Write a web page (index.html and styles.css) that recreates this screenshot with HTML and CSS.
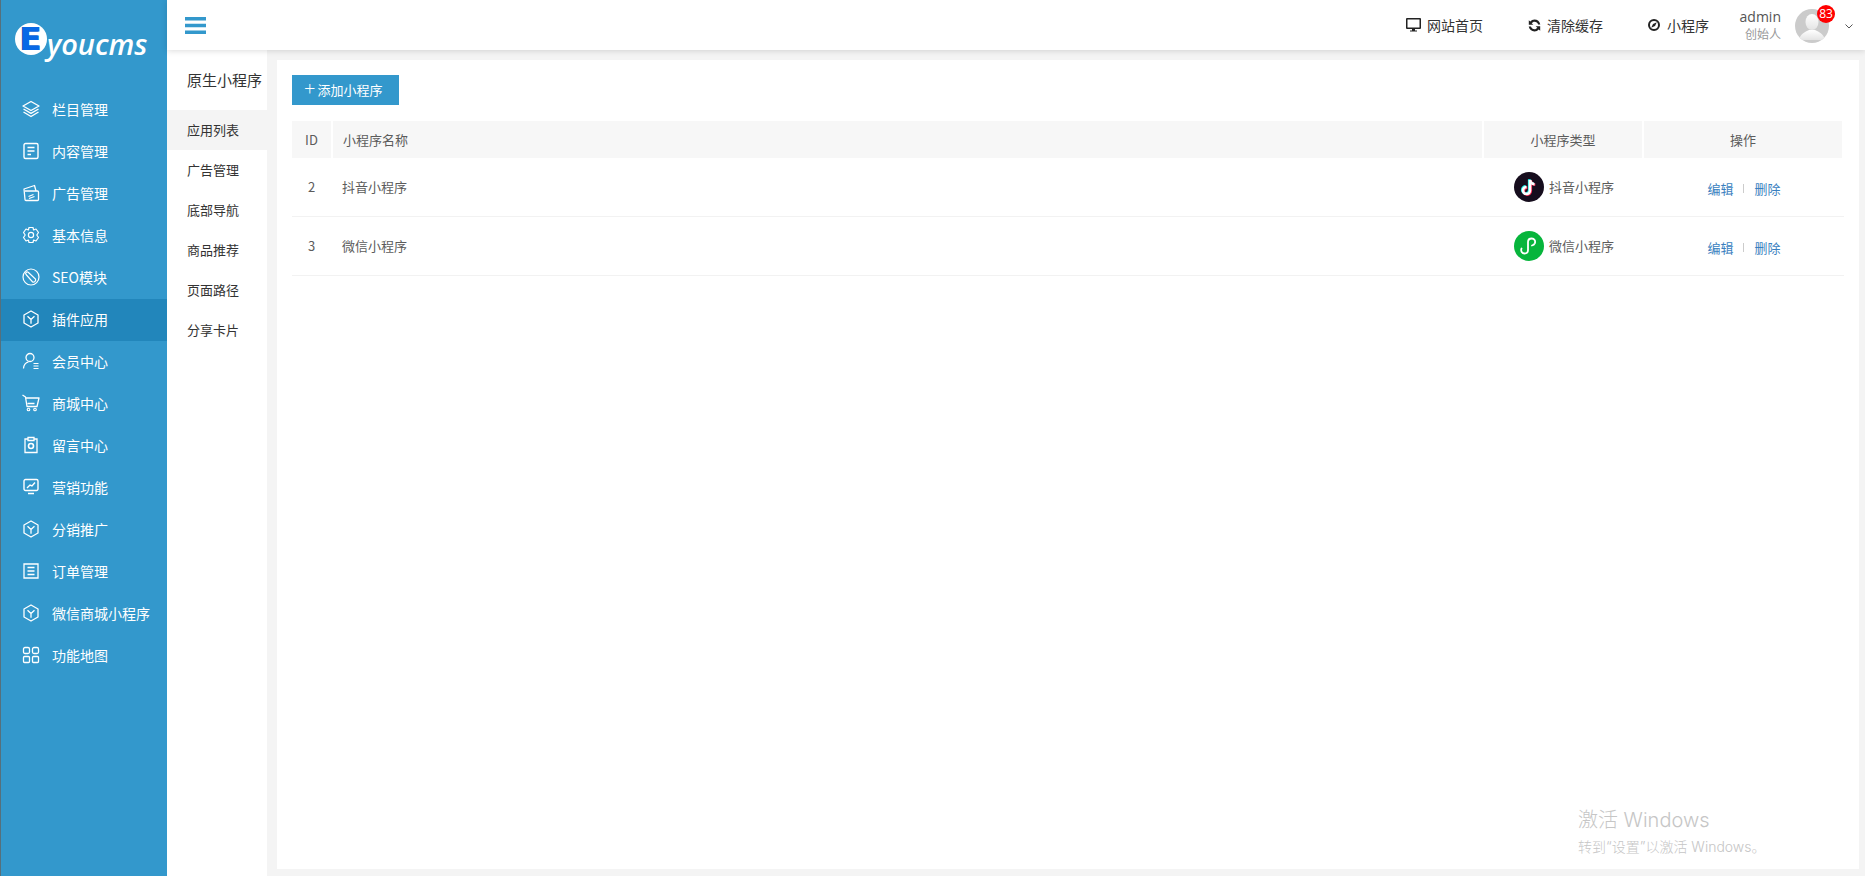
FILE: index.html
```html
<!DOCTYPE html>
<html lang="zh-CN">
<head>
<meta charset="utf-8">
<title>原生小程序</title>
<link rel="stylesheet" href="styles.css">
</head>
<body>
<svg class="defs" width="0" height="0" aria-hidden="true">
  <symbol id="cube" viewBox="0 0 18 18"><path d="M9 1 16 5V13L9 17 2 13V5Z M5.500 6.200 9 9.400 12.500 6.200 M9 9.400V13.800" fill="none" stroke="currentColor" stroke-width="1.300" stroke-linejoin="round"/></symbol>
</svg>
<div class="app">
  <aside class="sidebar">
    <div class="logo"><span class="logo-e">E</span><span class="logo-text">youcms</span></div>
    <nav class="menu">
      <a class="menu-item"><svg class="mi" viewBox="0 0 18 18"><path d="M9 1.500 17 6 9 10.500 1 6Z M1.500 9 9 13.300 16.500 9 M1.500 12 9 16.500 16.500 12" fill="none" stroke="currentColor" stroke-width="1.400" stroke-linejoin="round"/></svg>栏目管理</a>
      <a class="menu-item"><svg class="mi" viewBox="0 0 18 18"><path d="M3.500 1.500H14.500A1.500 1.500 0 0 1 16 3V15A1.500 1.500 0 0 1 14.500 16.500H3.500A1.500 1.500 0 0 1 2 15V3A1.500 1.500 0 0 1 3.500 1.500Z M5.500 5.500H12.500 M5.500 9H12.500 M5.500 12.500H9" fill="none" stroke="currentColor" stroke-width="1.400"/></svg>内容管理</a>
      <a class="menu-item"><svg class="mi" viewBox="0 0 18 18"><path d="M3 7H15.500A1 1 0 0 1 16.500 8V15.500A1 1 0 0 1 15.500 16.500H4A1 1 0 0 1 3 15.500L2 5 12.500 1.500 14 7 M6.500 12.500 11.500 10.500 M7 14.500 12.500 12.500" fill="none" stroke="currentColor" stroke-width="1.300" stroke-linejoin="round"/></svg>广告管理</a>
      <a class="menu-item"><svg class="mi" viewBox="0 0 18 18"><path d="M7 1.500H11L11.600 4 14 3 16.500 6.500 14.800 9 16.500 11.500 14 15 11.600 14 11 16.500H7L6.400 14 4 15 1.500 11.500 3.200 9 1.500 6.500 4 3 6.400 4Z" fill="none" stroke="currentColor" stroke-width="1.200" stroke-linejoin="round"/><circle cx="9" cy="9" r="2.600" fill="none" stroke="currentColor" stroke-width="1.200"/></svg>基本信息</a>
      <a class="menu-item"><svg class="mi" viewBox="0 0 18 18"><circle cx="9" cy="9" r="8" fill="none" stroke="currentColor" stroke-width="1.200"/><path d="M6.200 4.300 13.500 11A2.300 2.300 0 0 1 10.600 14L4.300 6.800A1.500 1.500 0 0 1 6.200 4.300Z" fill="none" stroke="currentColor" stroke-width="1.200"/></svg>SEO模块</a>
      <a class="menu-item active"><svg class="mi"><use href="#cube"/></svg>插件应用</a>
      <a class="menu-item"><svg class="mi" viewBox="0 0 18 18"><circle cx="8" cy="5.500" r="4" fill="none" stroke="currentColor" stroke-width="1.300"/><path d="M1.500 16.500C1.800 12.500 3.500 10.500 6.500 9.800 M11.500 11.500H16.500 M11.500 14H16.500 M11.500 16.500H16.500" fill="none" stroke="currentColor" stroke-width="1.200"/></svg>会员中心</a>
      <a class="menu-item"><svg class="mi" viewBox="0 0 18 18"><path d="M.5 1 3.500 3 5 12.500H15L17 4H3.800 M5.500 9.500H12.500" fill="none" stroke="currentColor" stroke-width="1.300" stroke-linejoin="round"/><circle cx="6.500" cy="15.500" r="1.300" fill="none" stroke="currentColor" stroke-width="1.100"/><circle cx="13" cy="15.500" r="1.300" fill="none" stroke="currentColor" stroke-width="1.100"/></svg>商城中心</a>
      <a class="menu-item"><svg class="mi" viewBox="0 0 18 18"><path d="M6 3H3V16.500H15V3H12 M6 1.500H12V4.500H6Z" fill="none" stroke="currentColor" stroke-width="1.300"/><circle cx="9" cy="10" r="2.500" fill="none" stroke="currentColor" stroke-width="1.600"/></svg>留言中心</a>
      <a class="menu-item"><svg class="mi" viewBox="0 0 18 18"><path d="M3.500 1.500H14.500A1.500 1.500 0 0 1 16 3V11A1.500 1.500 0 0 1 14.500 12.500H3.500A1.500 1.500 0 0 1 2 11V3A1.500 1.500 0 0 1 3.500 1.500Z M5 10 8 7 10 8 13 4.500 M6 15.500H12" fill="none" stroke="currentColor" stroke-width="1.400"/></svg>营销功能</a>
      <a class="menu-item"><svg class="mi"><use href="#cube"/></svg>分销推广</a>
      <a class="menu-item"><svg class="mi" viewBox="0 0 18 18"><path d="M2 2H16V16H2Z M5.500 5.500H12.500 M5.500 9H12.500 M5.500 12.500H12.500" fill="none" stroke="currentColor" stroke-width="1.300"/></svg>订单管理</a>
      <a class="menu-item"><svg class="mi"><use href="#cube"/></svg>微信商城小程序</a>
      <a class="menu-item"><svg class="mi" viewBox="0 0 18 18"><g fill="none" stroke="currentColor" stroke-width="1.300"><rect x="1.500" y="1.500" width="6" height="6" rx="1.500"/><rect x="10.500" y="1.500" width="6" height="6" rx="1.500"/><rect x="1.500" y="10.500" width="6" height="6" rx="1"/><rect x="10.500" y="10.500" width="6" height="6" rx="1"/></g></svg>功能地图</a>
    </nav>
  </aside>
  <div class="main">
    <header class="topbar">
      <svg class="burger" viewBox="0 0 21 17"><path d="M0 0H21V3.500H0Z M0 6.800H21V10.300H0Z M0 13.500H21V17H0Z" fill="currentColor"/></svg>
      <div class="tools">
        <a class="tool tool-home"><svg class="ti ti-w15" viewBox="0 0 15 14"><path d="M0 1A1 1 0 0 1 1 0H14A1 1 0 0 1 15 1V10A1 1 0 0 1 14 11H9V12.500H11V13.500H4V12.500H6V11H1A1 1 0 0 1 0 10Z M1.500 1.500V9.500H13.500V1.500Z" fill="#222" fill-rule="evenodd"/></svg>网站首页</a>
        <a class="tool tool-clear"><svg class="ti ti-w13" viewBox="0 0 13 13"><path d="M12.300 5.400C11.800 2.500 9.400.5 6.500.5 4.800.5 3.300 1.300 2.300 2.500L.8 1.200V5.700H5.300L3.700 4.200C4.400 3.300 5.400 2.700 6.500 2.700 8.200 2.700 9.600 3.800 10.100 5.400Z M.7 7.600C1.200 10.500 3.600 12.500 6.500 12.500 8.200 12.500 9.700 11.700 10.700 10.500L12.200 11.800V7.300H7.700L9.300 8.800C8.600 9.700 7.600 10.300 6.500 10.300 4.800 10.300 3.400 9.200 2.900 7.600Z" fill="#222"/></svg>清除缓存</a>
        <a class="tool tool-mini"><svg class="ti ti-w12" viewBox="0 0 12 12"><circle cx="6" cy="6" r="5" fill="none" stroke="#222" stroke-width="2"/><path d="M8.800 3.200 7 7 3.200 8.800 5 5Z" fill="#222"/></svg>小程序</a>
        <div class="who"><span class="who-name">admin</span><span class="who-role">创始人</span></div>
        <div class="avatar">
          <svg viewBox="0 0 34 34"><defs><clipPath id="avclip"><circle cx="17" cy="17" r="17"/></clipPath><linearGradient id="avg" x1="0" y1="0" x2="0" y2="1"><stop offset="0" stop-color="#fff"/><stop offset="1" stop-color="#e4e4e4"/></linearGradient></defs><circle cx="17" cy="17" r="17" fill="#cbcbcb"/><g clip-path="url(#avclip)" fill="url(#avg)"><ellipse cx="17" cy="13" rx="6.500" ry="8"/><path d="M4 31C5 25 10 23 14 21H20C24 23 29 25 30 31Z"/></g></svg>
          <span class="badge">83</span>
        </div>
        <svg class="chev" viewBox="0 0 8 5"><path d="M.5.500 4 4 7.500.500" fill="none" stroke="#555" stroke-width="1"/></svg>
      </div>
    </header>
    <div class="body-row">
      <nav class="subnav">
        <div class="subnav-title">原生小程序</div>
        <a class="sub-item current">应用列表</a>
        <a class="sub-item">广告管理</a>
        <a class="sub-item">底部导航</a>
        <a class="sub-item">商品推荐</a>
        <a class="sub-item">页面路径</a>
        <a class="sub-item">分享卡片</a>
      </nav>
      <main class="content">
        <section class="card">
          <a class="add-btn"><span class="plus">+</span>添加小程序</a>
          <table class="grid">
            <colgroup><col class="c-id"><col class="c-name"><col class="c-type"><col class="c-op"></colgroup>
            <thead>
              <tr><th>ID</th><th class="left">小程序名称</th><th>小程序类型</th><th>操作</th></tr>
            </thead>
            <tbody>
              <tr>
                <td class="mid">2</td>
                <td class="name">抖音小程序</td>
                <td><div class="type"><svg class="type-icon" viewBox="0 0 30 30"><circle cx="15" cy="15" r="15" fill="#160d1d"/><g fill="none" stroke-width="2.600"><path d="M16 8V18.500A3.500 3.500 0 1 1 12.500 15" stroke="#25f4ee" transform="translate(-.8 -.6)"/><path d="M16 8C16.300 10.500 18 12 20.500 12.200" stroke="#25f4ee" transform="translate(-.8 -.6)"/><path d="M16 8V18.500A3.500 3.500 0 1 1 12.500 15" stroke="#fe2c55" transform="translate(.8 .6)"/><path d="M16 8C16.300 10.500 18 12 20.500 12.200" stroke="#fe2c55" transform="translate(.8 .6)"/><path d="M16 8V18.500A3.500 3.500 0 1 1 12.500 15" stroke="#fff"/><path d="M16 8C16.300 10.500 18 12 20.500 12.200" stroke="#fff"/></g></svg><span>抖音小程序</span></div></td>
                <td class="ops"><a>编辑</a><i class="sep"></i><a>删除</a></td>
              </tr>
              <tr>
                <td class="mid">3</td>
                <td class="name">微信小程序</td>
                <td><div class="type"><svg class="type-icon" viewBox="0 0 30 30"><circle cx="15" cy="15" r="15" fill="#07b53c"/><path d="M7.500 17.500C6.500 20 8 22.500 10.500 22.500 12.800 22.500 14 20.800 14 19V11C14 9 15.500 7.500 17.800 7.500 20.300 7.500 21.800 10 20.800 12.300 20.200 13.500 19.200 14.200 18 14.500" fill="none" stroke="#fff" stroke-width="1.800" stroke-linecap="round"/></svg><span>微信小程序</span></div></td>
                <td class="ops"><a>编辑</a><i class="sep"></i><a>删除</a></td>
              </tr>
            </tbody>
          </table>
        </section>
      </main>
    </div>
  </div>
</div>
<div class="watermark"><div class="wm-1">激活 Windows</div><div class="wm-2">转到“设置”以激活 Windows。</div></div>
</body>
</html>
```
FILE: styles.css
```css
* { box-sizing: border-box; }
html, body { margin: 0; height: 100%; overflow: hidden; }
body {
  font-family: "Noto Sans CJK SC", "Open Sans", sans-serif;
  color: #333;
  background: #f4f4f4;
}
a { text-decoration: none; color: inherit; }
.defs { position: absolute; }
.app { display: flex; height: 876px; }

.sidebar {
  width: 167px;
  flex: none;
  background: #3398cc;
  border-left: 1px solid #55707c;
  color: #fff;
}
.logo { height: 89px; display: flex; align-items: flex-start; padding: 23px 0 0 14px; }
.logo-e {
  width: 32px;
  height: 32px;
  flex: none;
  border-radius: 50%;
  background: #fff;
  color: #0869e6;
  font: 700 32px/32px "DejaVu Sans", sans-serif;
  text-align: center;
  text-shadow: -1px 0 0 #0a4fa8;
}
.logo-text {
  font: italic 600 29px/28px "Open Sans", sans-serif;
  margin: 7px 0 0 0;
  color: #fff;
}
.menu-item {
  display: flex;
  align-items: center;
  gap: 12px;
  height: 42px;
  padding: 0 0 2px 21px;
  font-size: 14px;
  line-height: 20px;
}
.menu-item.active { background: #2286bb; }
.mi { width: 18px; height: 18px; flex: none; color: #fff; }

.main { flex: 1; min-width: 0; display: flex; flex-direction: column; }
.topbar {
  height: 50px;
  flex: none;
  display: flex;
  align-items: center;
  padding: 0 12px 0 18px;
  background: #fff;
  box-shadow: 0 1px 6px rgba(0, 0, 0, .14);
  position: relative;
  z-index: 2;
}
.burger { width: 21px; height: 17px; color: #3398cc; flex: none; margin-top: 1px; }
.tools { margin-left: auto; display: flex; align-items: center; }
.tool { display: flex; align-items: center; font-size: 14px; line-height: 20px; color: #333; }
.tool-home { gap: 6px; margin-right: 45px; }
.tool-clear { gap: 6px; margin-right: 45px; }
.tool-mini { gap: 7px; margin-right: 30px; }
.ti-w15 { width: 15px; height: 14px; }
.ti-w13 { width: 13px; height: 13px; }
.ti-w12 { width: 12px; height: 12px; }
.who { display: flex; flex-direction: column; align-items: flex-end; width: 42px; margin-right: 14px; }
.who-name { font: 14px/18px "Open Sans", sans-serif; color: #555; }
.who-role { font-size: 12px; line-height: 16px; color: #999; white-space: nowrap; }
.avatar { position: relative; width: 34px; height: 34px; margin-right: 16px; margin-top: 1px; }
.avatar svg { display: block; width: 34px; height: 34px; }
.badge {
  position: absolute;
  left: 22px;
  top: -4px;
  width: 18px;
  height: 18px;
  border-radius: 50%;
  background: #f00;
  color: #fff;
  font: 12px/18px "Open Sans", sans-serif;
  text-align: center;
}
.chev { width: 8px; height: 5px; flex: none; margin-top: 2px; }

.body-row { flex: 1; min-height: 0; display: flex; }
.subnav { width: 100px; flex: none; background: #fff; }
.subnav-title { height: 60px; padding: 20px 0 0 20px; font-size: 15px; line-height: 20px; color: #333; white-space: nowrap; }
.sub-item { display: block; height: 40px; padding-left: 20px; font-size: 13px; line-height: 40px; color: #333; }
.sub-item.current { background: #f4f4f4; }

.content { flex: 1; min-width: 0; padding: 10px 6px 7px 10px; }
.card { height: 100%; background: #fff; padding: 15px 15px 0; }
.add-btn {
  display: block;
  width: 107px;
  height: 30px;
  padding-left: 12px;
  background: #3398cc;
  color: #fff;
  font-size: 13px;
  line-height: 28px;
  white-space: nowrap;
}
.plus { font: 300 20px/28px "Open Sans", sans-serif; margin-right: 2px; vertical-align: -1px; }
.grid {
  margin-top: 16px;
  width: 1552px;
  table-layout: fixed;
  border-collapse: separate;
  border-spacing: 0;
  font-size: 13px;
  color: #5c5c5c;
}
.c-id { width: 41px; }
.c-name { width: 1151px; }
.c-type { width: 160px; }
.c-op { width: 200px; }
.grid th {
  height: 37px;
  padding: 0;
  background: #f7f7f7;
  border-right: 2px solid #fff;
  font-weight: 400;
  line-height: 18px;
  text-align: center;
}
.grid th.left { text-align: left; padding-left: 10px; }
.grid td { height: 59px; padding: 0 0 1px; border-bottom: 1px solid #f2f2f2; vertical-align: middle; }
.grid td.mid { text-align: center; padding-right: 2px; }
.grid td.name { padding-left: 9px; }
.type { display: flex; align-items: center; gap: 5px; padding-left: 30px; }
.type-icon { width: 30px; height: 30px; flex: none; }
.ops { text-align: center; padding: 3px 0 0 0 !important; color: #3a7fc0; white-space: nowrap; }
.sep { display: inline-block; width: 1px; height: 9px; background: #ccc; margin: 0 10px 0 9px; vertical-align: 1px; }
.ops a { display: inline-block; width: 27px; }

.watermark { position: absolute; left: 1578px; top: 806px; color: #c6c6c6; pointer-events: none; white-space: nowrap; font-family: Inter, "Noto Sans CJK SC", sans-serif; }
.wm-1 { font-size: 20px; line-height: 28px; font-weight: 300; }
.wm-2 { font-size: 14px; line-height: 22px; margin-top: 2px; font-weight: 300; }
```
